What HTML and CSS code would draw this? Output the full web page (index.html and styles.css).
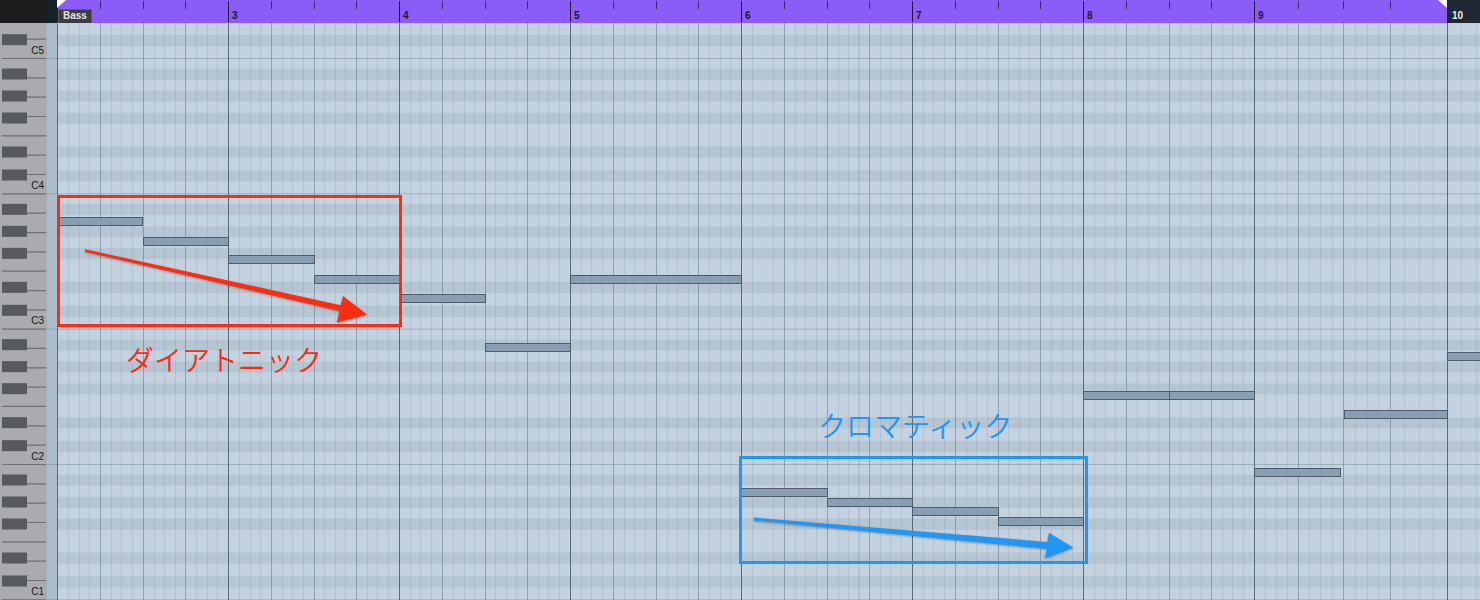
FILE: index.html
```html
<!DOCTYPE html>
<html lang="ja">
<head>
<meta charset="utf-8">
<title>Bass – Key Editor</title>
<link rel="stylesheet" href="styles.css">
</head>
<body>
<div class="editor">
  <div class="corner"></div>
  <div class="corner-gutter"></div>

  <div class="ruler">
    <div class="bar"><div class="beat"></div><div class="beat"></div><div class="beat"></div><div class="beat"></div></div>
    <div class="bar"><div class="beat"><span class="num">3</span></div><div class="beat"></div><div class="beat"></div><div class="beat"></div></div>
    <div class="bar"><div class="beat"><span class="num">4</span></div><div class="beat"></div><div class="beat"></div><div class="beat"></div></div>
    <div class="bar"><div class="beat"><span class="num">5</span></div><div class="beat"></div><div class="beat"></div><div class="beat"></div></div>
    <div class="bar"><div class="beat"><span class="num">6</span></div><div class="beat"></div><div class="beat"></div><div class="beat"></div></div>
    <div class="bar"><div class="beat"><span class="num">7</span></div><div class="beat"></div><div class="beat"></div><div class="beat"></div></div>
    <div class="bar"><div class="beat"><span class="num">8</span></div><div class="beat"></div><div class="beat"></div><div class="beat"></div></div>
    <div class="bar bar-wide"><div class="beat"><span class="num">9</span></div><div class="beat"></div><div class="beat"></div><div class="beat"></div></div>
    <div class="bar bar-tail"><div class="beat"><span class="num">10</span></div><div class="beat"></div><div class="beat"></div><div class="beat"></div></div>
    <span class="part-tag">Bass</span>
    <span class="locator locator-left"></span>
    <span class="locator locator-right"></span>
  </div>

  <div class="keyboard">
    <svg class="keys" width="47" height="577" viewBox="0 0 47 577">
      <defs>
        <g id="octave">
          <path d="M2 0.5H46M2 19.8H46M2 39.2H46M2 58.5H46M2 77.8H46M2 97.2H46M2 116.5H46" stroke="#6c6f73" stroke-width="1.2" fill="none"/>
          <g fill="#56595d">
            <rect x="2" y="10.5" width="25" height="11"/>
            <rect x="2" y="32.5" width="25" height="11"/>
            <rect x="2" y="54.5" width="25" height="11"/>
            <rect x="2" y="88.5" width="25" height="11"/>
            <rect x="2" y="111.5" width="25" height="11"/>
          </g>
        </g>
      </defs>
      <use href="#octave" y="-100.33"/>
      <use href="#octave" y="35"/>
      <use href="#octave" y="170.33"/>
      <use href="#octave" y="305.67"/>
      <use href="#octave" y="441"/>
      <use href="#octave" y="576.33"/>
      <g class="key-names">
        <text x="44" y="30.5">C5</text>
        <text x="44" y="165.8">C4</text>
        <text x="44" y="301.2">C3</text>
        <text x="44" y="436.5">C2</text>
        <text x="44" y="571.8">C1</text>
      </g>
    </svg>
  </div>

  <div class="gutter"></div>

  <div class="roll">
    <div class="bars">
      <div class="bar"><div class="beat"></div><div class="beat"></div><div class="beat"></div><div class="beat"></div></div>
      <div class="bar"><div class="beat"></div><div class="beat"></div><div class="beat"></div><div class="beat"></div></div>
      <div class="bar"><div class="beat"></div><div class="beat"></div><div class="beat"></div><div class="beat"></div></div>
      <div class="bar"><div class="beat"></div><div class="beat"></div><div class="beat"></div><div class="beat"></div></div>
      <div class="bar"><div class="beat"></div><div class="beat"></div><div class="beat"></div><div class="beat"></div></div>
      <div class="bar"><div class="beat"></div><div class="beat"></div><div class="beat"></div><div class="beat"></div></div>
      <div class="bar"><div class="beat"></div><div class="beat"></div><div class="beat"></div><div class="beat"></div></div>
      <div class="bar bar-wide"><div class="beat"></div><div class="beat"></div><div class="beat"></div><div class="beat"></div></div>
      <div class="bar bar-tail"><div class="beat"></div><div class="beat"></div><div class="beat"></div><div class="beat"></div></div>
    </div>

    <div class="note" style="left:0px;top:194px;width:86px"></div>
    <div class="note" style="left:86px;top:214px;width:86px"></div>
    <div class="note" style="left:171px;top:232px;width:87px"></div>
    <div class="note" style="left:257px;top:252px;width:86px"></div>
    <div class="note" style="left:342px;top:271px;width:87px"></div>
    <div class="note" style="left:428px;top:320px;width:86px"></div>
    <div class="note" style="left:513px;top:252px;width:172px"></div>
    <div class="note" style="left:684px;top:465px;width:87px"></div>
    <div class="note" style="left:770px;top:475px;width:86px"></div>
    <div class="note" style="left:855px;top:484px;width:87px"></div>
    <div class="note" style="left:941px;top:494px;width:86px"></div>
    <div class="note" style="left:1026px;top:368px;width:87px"></div>
    <div class="note" style="left:1112px;top:368px;width:86px"></div>
    <div class="note" style="left:1197px;top:445px;width:87px"></div>
    <div class="note" style="left:1287px;top:387px;width:104px"></div>
    <div class="note" style="left:1390px;top:329px;width:100px"></div>
  </div>
</div>

<div class="overlay">
  <div class="frame frame-diatonic"></div>
  <div class="frame frame-chromatic"></div>
  <svg class="arrows" width="1480" height="600" viewBox="0 0 1480 600">
    <polygon class="arrow-red" points="85,249.2 340.7,305.2 343,296 367,314.5 337,322.5 339.3,311 85,251.8"/>
    <polygon class="arrow-blue" points="754,517.6 1047.3,541.9 1049,532.7 1073.5,547.7 1045,558.3 1046.7,548.9 754,520.4"/>
  </svg>
  <span class="caption caption-diatonic">ダイアトニック</span>
  <span class="caption caption-chromatic">クロマティック</span>
</div>
</body>
</html>
```

FILE: styles.css
```css
* {
  box-sizing: border-box;
}

html,
body {
  margin: 0;
  padding: 0;
}

body {
  position: relative;
  width: 1480px;
  height: 600px;
  overflow: hidden;
  background: #c3d2de;
  font-family: "Liberation Sans", Arial, sans-serif;
}

/* editor frame: keyboard | gutter | note grid, ruler on top */
.editor {
  display: grid;
  grid-template-columns: 47px 10px 1fr;
  grid-template-rows: 23px 577px;
  width: 1480px;
  height: 600px;
}

.corner {
  background: #1c1c1e;
}

.corner-gutter {
  background: #16222c;
}

/* ---------- ruler ---------- */
.ruler {
  position: relative;
  display: flex;
  overflow: hidden;
  background: #8a5cf8;
}

.bar {
  flex: none;
  display: flex;
  width: 171px;
}

.bar > .beat {
  flex: 1 1 0;
  min-width: 0;
}

.bar-wide {
  width: 193px;
}

.bar-wide > .beat:nth-child(1) { flex-grow: 44; }
.bar-wide > .beat:nth-child(2) { flex-grow: 45; }
.bar-wide > .beat:nth-child(3) { flex-grow: 47; }
.bar-wide > .beat:nth-child(4) { flex-grow: 57; }

.bar-tail {
  width: 228px;
}

.ruler .beat {
  background-image: linear-gradient(#3a2d68, #3a2d68);
  background-size: 1px 8px;
  background-position: 0 1px;
  background-repeat: no-repeat;
}

.ruler .beat:first-child {
  background-image: linear-gradient(#221c33, #221c33);
  background-size: 1px 21px;
}

.ruler .bar-tail {
  background: #1e2933;
}

.ruler .bar-tail .beat {
  background: none;
}

.num {
  display: block;
  margin: 11px 0 0 4px;
  font-weight: bold;
  font-size: 10px;
  line-height: 10px;
  color: #1c1830;
}

.bar-tail .num {
  margin-left: 5px;
  color: #eceef0;
}

.part-tag {
  position: absolute;
  left: 1px;
  top: 9px;
  width: 34px;
  height: 14px;
  padding-left: 4px;
  background: #3b3c41;
  border: 1px solid #5d5e63;
  border-bottom: none;
  font-weight: bold;
  font-size: 10px;
  line-height: 12px;
  color: #e4e4e6;
}

.locator {
  position: absolute;
  top: 0;
  width: 0;
  height: 0;
  border-top: 8px solid #ffffff;
}

.locator-left {
  left: 0;
  border-right: 9px solid transparent;
}

.locator-right {
  left: 1381px;
  border-left: 9px solid transparent;
}

/* ---------- keyboard ---------- */
.keyboard {
  background: #a9abaf;
  overflow: hidden;
}

.keys {
  display: block;
}

.key-names text {
  font-family: "Liberation Sans", Arial, sans-serif;
  font-size: 10px;
  fill: #151515;
  text-anchor: end;
}

.gutter {
  background-color: #abbdcb;
  background-image: linear-gradient(to bottom, #8fa2b1 0 1px, transparent 1px);
  background-size: 100% 135.333px;
  background-position: 0 35px;
}

/* ---------- note grid ---------- */
.roll {
  position: relative;
  overflow: hidden;
  background-color: #c3d2de;
  background-image: linear-gradient(to bottom,
    #9db0be 0 1px,
    transparent 1px 11px,
    #b5c5d1 11px 22px,
    transparent 22px 33px,
    #b5c5d1 33px 44px,
    transparent 44px 55px,
    #b5c5d1 55px 66px,
    transparent 66px 89px,
    #b5c5d1 89px 100px,
    transparent 100px 112px,
    #b5c5d1 112px 123px,
    transparent 123px);
  background-size: 100% 135.333px;
  background-position: 0 35px;
}

.bars {
  display: flex;
  height: 100%;
}

.roll .beat {
  --line: rgba(72, 95, 116, 0.42);
  --sub: rgba(95, 120, 142, 0.17);
  background-image:
    linear-gradient(to right, var(--line) 0 1px, transparent 1px),
    linear-gradient(to right,
      transparent 25%,
      var(--sub) 25% calc(25% + 1px),
      transparent calc(25% + 1px) 50%,
      var(--sub) 50% calc(50% + 1px),
      transparent calc(50% + 1px) 75%,
      var(--sub) 75% calc(75% + 1px),
      transparent calc(75% + 1px));
}

.roll .beat:first-child {
  --line: rgba(58, 78, 98, 0.78);
}

.note {
  position: absolute;
  height: 9px;
  background: #8a9eb2;
  border: 1px solid #4e5c6a;
}

/* ---------- annotations ---------- */
.overlay {
  position: absolute;
  inset: 0;
  pointer-events: none;
}

.frame {
  position: absolute;
  border: 3px solid;
}

.frame-diatonic {
  left: 57px;
  top: 195px;
  width: 345px;
  height: 132px;
  border-color: #fb2c12;
}

.frame-chromatic {
  left: 739px;
  top: 456px;
  width: 349px;
  height: 108px;
  border-color: #2196f3;
}

.arrows {
  position: absolute;
  left: 0;
  top: 0;
}

.arrow-red {
  fill: #fb2c12;
  filter: drop-shadow(0 1px 1px rgba(0, 0, 0, 0.3));
}

.arrow-blue {
  fill: #2196f3;
  filter: drop-shadow(0 1px 1px rgba(0, 0, 0, 0.3));
}

.caption {
  position: absolute;
  font-family: "Noto Sans CJK JP", "Noto Sans CJK SC", sans-serif;
  font-weight: 350;
  font-size: 28px;
  line-height: 28px;
  white-space: nowrap;
}

.caption-diatonic {
  left: 126px;
  top: 345px;
  color: #fb2a12;
}

.caption-chromatic {
  left: 818px;
  top: 411px;
  color: #2196f3;
}
```
